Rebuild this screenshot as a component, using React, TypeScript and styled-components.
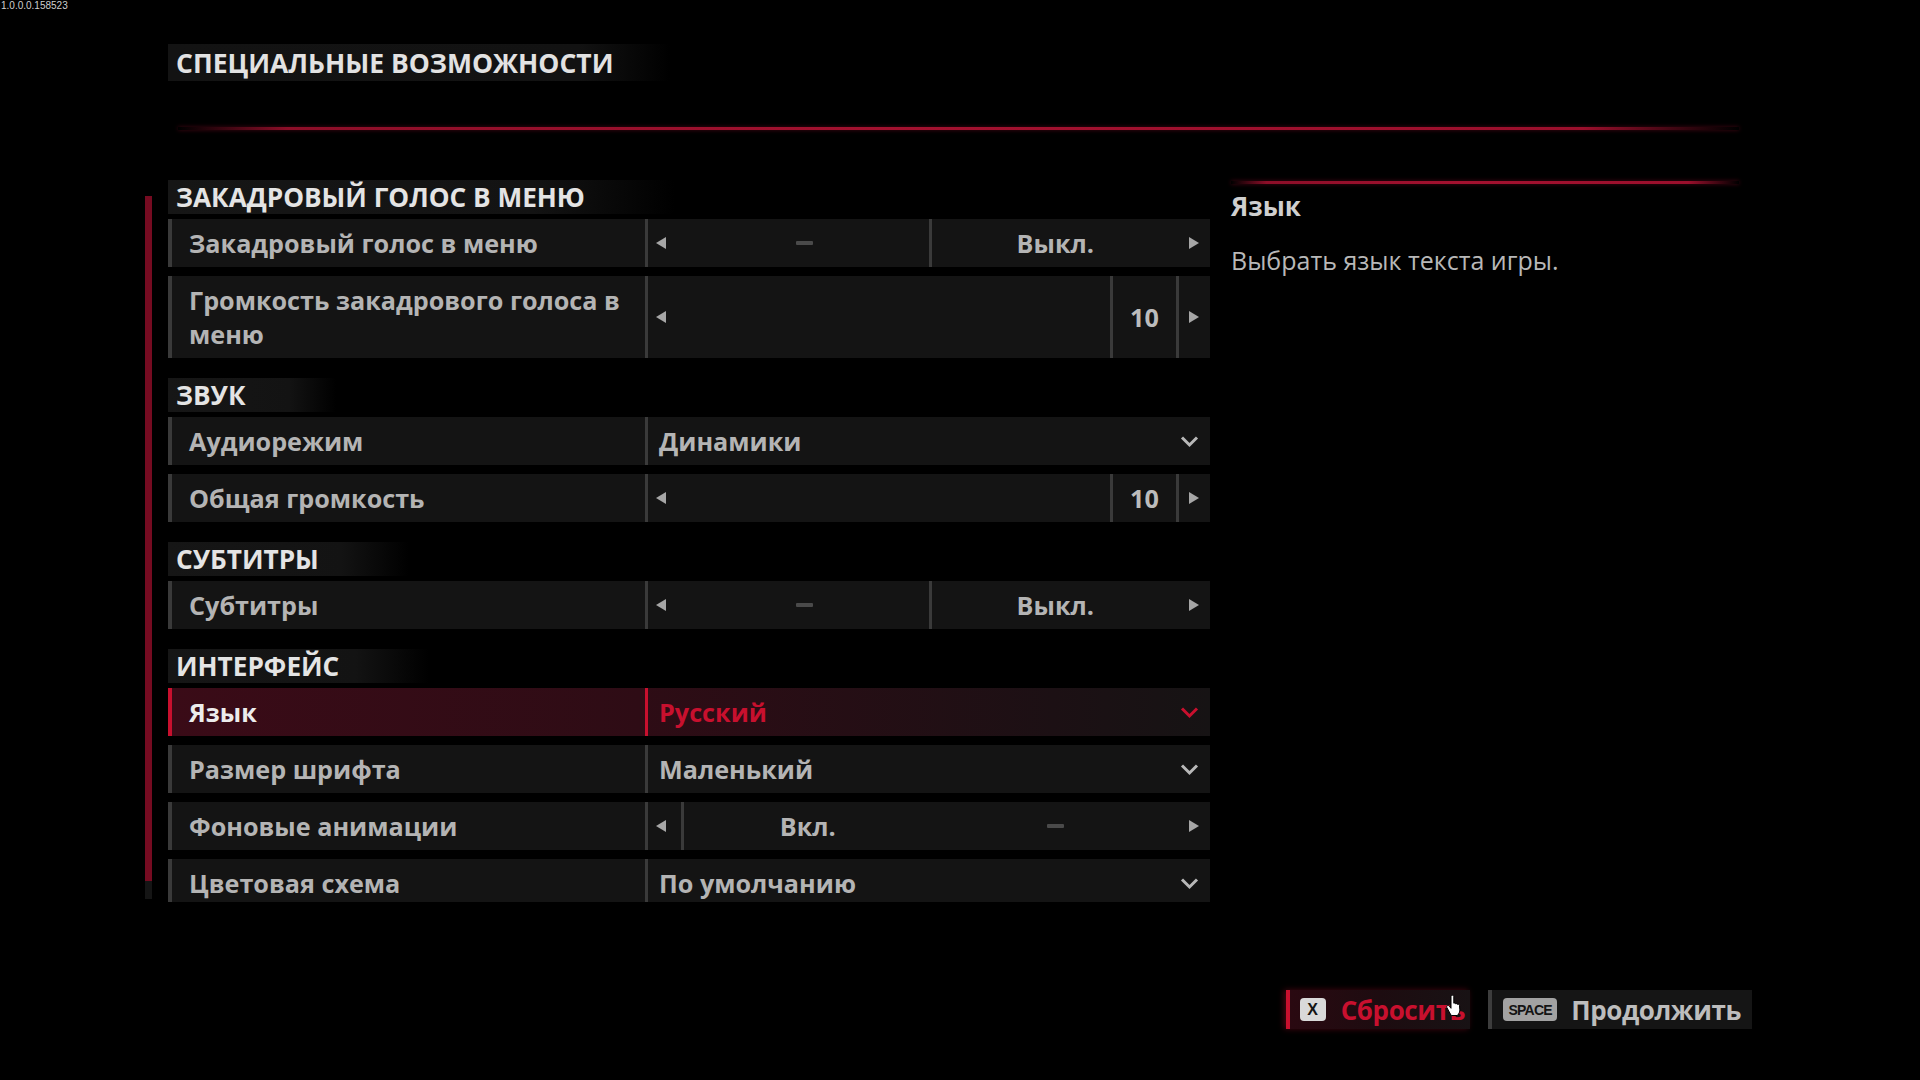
import React from "react";
import styled, { createGlobalStyle, css } from "styled-components";

const GlobalStyle = createGlobalStyle`
  html, body {
    margin: 0;
    padding: 0;
    background: #000;
  }
  * { box-sizing: border-box; }
`;

const FONT = `"Open Sans", "Noto Sans", sans-serif`;
const RED = "#c8102e";
const TEXT = "#b4b4b4";
const EDGE = "#3a3a3a";

const Page = styled.div`
  position: relative;
  width: 1920px;
  height: 1080px;
  overflow: hidden;
  background: #000;
  font-family: ${FONT};
  display: flex;
  flex-direction: column;
`;

const BuildStamp = styled.div`
  position: absolute;
  top: 0;
  left: 1px;
  font-family: "Liberation Sans", Arial, sans-serif;
  font-size: 10px;
  line-height: 11px;
  color: #cfcfcf;
`;

const Header = styled.header`
  padding: 44px 0 0 168px;
`;

const TitleBar = styled.div`
  width: 502px;
  height: 37px;
  display: flex;
  align-items: center;
  padding-left: 8px;
  background: linear-gradient(90deg, #131313 0%, #121212 82%, rgba(18, 18, 18, 0) 100%);
`;

const Title = styled.h1`
  margin: 0;
  font-size: 26.5px;
  font-weight: 700;
  color: #e2e2e2;
  white-space: nowrap;
`;

const Rule = styled.div<{ $width: number }>`
  height: 3px;
  width: ${(p) => p.$width}px;
  background: linear-gradient(
    90deg,
    rgba(150, 14, 42, 0) 0%,
    #8c0e28 7%,
    #a3112f 45%,
    #9b0f2c 90%,
    rgba(150, 14, 42, 0) 100%
  );
  box-shadow: 0 0 4px rgba(160, 16, 46, 0.45);
`;

const TopRule = styled(Rule)`
  margin: 46px 0 0 178px;
`;

const Body = styled.main`
  margin-top: 50px;
  padding-left: 145px;
  display: flex;
  height: 722px;
`;

const ScrollTrack = styled.div`
  margin-top: 16px;
  width: 7px;
  height: 703px;
  background: #151515;
`;

const ScrollThumb = styled.div`
  width: 100%;
  background: #760b21;
`;

const List = styled.div`
  margin-left: 16px;
  width: 1042px;
  height: 722px;
  overflow: hidden;
  display: flex;
  flex-direction: column;
  gap: 20px;
`;

const Section = styled.section`
  display: flex;
  flex-direction: column;
  align-items: flex-start;
`;

const SectionTitle = styled.h2`
  margin: 0;
  height: 34px;
  display: inline-flex;
  align-items: center;
  padding: 0 90px 0 8px;
  font-size: 26.2px;
  font-weight: 700;
  color: #e4e4e4;
  white-space: nowrap;
  background: linear-gradient(90deg, #161616 0%, #131313 72%, rgba(19, 19, 19, 0) 100%);
`;

const Rows = styled.div`
  margin-top: 5px;
  width: 100%;
  display: flex;
  flex-direction: column;
  gap: 9px;
`;

const Row = styled.div<{ $active?: boolean }>`
  display: grid;
  grid-template-columns: 473px 1fr;
  min-height: 48px;
  background: #141414;
  border-left: 4px solid ${EDGE};
  ${(p) =>
    p.$active &&
    css`
      border-left-color: ${RED};
      background: linear-gradient(90deg, #3a0b17 0%, #2e0c15 45%, #1c1014 85%, #161314 100%);
    `}
`;

const Label = styled.div<{ $active?: boolean }>`
  display: flex;
  align-items: center;
  padding: 7px 18px 7px 17px;
  font-size: 25.2px;
  line-height: 34px;
  font-weight: 700;
  color: ${(p) => (p.$active ? "#ececec" : TEXT)};
`;

const Value = styled.div<{ $active?: boolean }>`
  display: flex;
  align-items: stretch;
  border-left: 3px solid ${(p) => (p.$active ? RED : EDGE)};
  color: ${(p) => (p.$active ? RED : TEXT)};
  font-size: 25.2px;
  font-weight: 700;
`;

const DropValue = styled.div`
  flex: 1;
  display: flex;
  align-items: center;
  justify-content: space-between;
  padding: 0 11px 0 11px;
`;

const ArrowZone = styled.div<{ $side: "left" | "right" }>`
  width: ${(p) => (p.$side === "left" ? 33 : 31)}px;
  flex: none;
  display: flex;
  align-items: center;
  padding-left: ${(p) => (p.$side === "left" ? 8 : 10)}px;
`;

const Triangle = styled.span<{ $dir: "left" | "right" }>`
  width: 0;
  height: 0;
  border-top: 6px solid transparent;
  border-bottom: 6px solid transparent;
  ${(p) =>
    p.$dir === "left"
      ? css`border-right: 10px solid #a6a6a6;`
      : css`border-left: 10px solid #a6a6a6;`}
`;

const Segment = styled.div`
  flex: 1;
  display: flex;
  align-items: center;
  justify-content: center;
`;

const Divider = styled.span`
  width: 3px;
  flex: none;
  background: ${EDGE};
`;

const Dash = styled.span`
  width: 17px;
  height: 4px;
  border-radius: 1px;
  background: #4a4a4a;
`;

const Track = styled.div`
  flex: 1;
`;

const Amount = styled.div`
  width: 63px;
  flex: none;
  display: flex;
  align-items: center;
  justify-content: center;
  color: #bcbcbc;
`;

const Aside = styled.aside`
  margin-left: 21px;
  width: 508px;
  padding-top: 1px;
`;

const AsideTitle = styled.h3`
  margin: 5px 0 0;
  font-size: 26px;
  line-height: 34px;
  font-weight: 700;
  color: #cfcfcf;
`;

const AsideText = styled.p`
  margin: 20px 0 0;
  font-size: 25px;
  line-height: 34px;
  font-weight: 400;
  color: #b8b8b8;
`;

const Footer = styled.footer`
  margin-top: 88px;
  padding-right: 168px;
  display: flex;
  justify-content: flex-end;
  gap: 18px;
`;

const Button = styled.button<{ $danger?: boolean }>`
  position: relative;
  height: 39px;
  display: flex;
  align-items: center;
  gap: ${(p) => (p.$danger ? 15 : 14)}px;
  padding: 0 ${(p) => (p.$danger ? 5 : 11)}px 0 ${(p) => (p.$danger ? 10 : 11)}px;
  border: none;
  border-left: 4px solid ${(p) => (p.$danger ? RED : "#3d3d3d")};
  background: ${(p) =>
    p.$danger ? "linear-gradient(90deg, #2a0911 0%, #1d0c10 50%, #181214 100%)" : "#151515"};
  color: ${(p) => (p.$danger ? RED : "#bdbdbd")};
  font-family: ${FONT};
  font-size: 26px;
  font-weight: 700;
  letter-spacing: -0.4px;
  cursor: pointer;
  ${(p) => p.$danger && css`box-shadow: -2px 0 6px rgba(200, 16, 46, 0.35);`}
`;

const KeyCap = styled.span<{ $wide?: boolean }>`
  height: 23px;
  min-width: ${(p) => (p.$wide ? 54 : 26)}px;
  padding: 0 2px;
  border-radius: 4px;
  display: inline-flex;
  align-items: center;
  justify-content: center;
  background: ${(p) => (p.$wide ? "#a2a2a2" : "#d9d9d9")};
  color: #141414;
  font-family: "Liberation Sans", Arial, sans-serif;
  font-weight: 700;
  font-size: ${(p) => (p.$wide ? 14 : 16)}px;
  letter-spacing: ${(p) => (p.$wide ? -0.8 : 0)}px;
`;

const Pointer = styled.svg`
  position: absolute;
  right: 8px;
  top: 5px;
`;

type Control =
  | { kind: "toggle"; on: boolean }
  | { kind: "slider"; value: number }
  | { kind: "select"; value: string };

type Setting = { label: string; control: Control; active?: boolean };
type Group = { title: string; items: Setting[] };

const groups: Group[] = [
  {
    title: "ЗАКАДРОВЫЙ ГОЛОС В МЕНЮ",
    items: [
      { label: "Закадровый голос в меню", control: { kind: "toggle", on: false } },
      { label: "Громкость закадрового голоса в меню", control: { kind: "slider", value: 10 } },
    ],
  },
  {
    title: "ЗВУК",
    items: [
      { label: "Аудиорежим", control: { kind: "select", value: "Динамики" } },
      { label: "Общая громкость", control: { kind: "slider", value: 10 } },
    ],
  },
  {
    title: "СУБТИТРЫ",
    items: [{ label: "Субтитры", control: { kind: "toggle", on: false } }],
  },
  {
    title: "ИНТЕРФЕЙС",
    items: [
      { label: "Язык", control: { kind: "select", value: "Русский" }, active: true },
      { label: "Размер шрифта", control: { kind: "select", value: "Маленький" } },
      { label: "Фоновые анимации", control: { kind: "toggle", on: true } },
      { label: "Цветовая схема", control: { kind: "select", value: "По умолчанию" } },
    ],
  },
];

const Chevron = ({ color }: { color: string }) => (
  <svg width="19" height="13" viewBox="0 0 19 13">
    <path d="M2 2.5 L9.5 10 L17 2.5" fill="none" stroke={color} strokeWidth="3" />
  </svg>
);

const ControlView = ({ control, active }: { control: Control; active?: boolean }) => {
  if (control.kind === "select") {
    return (
      <DropValue>
        <span>{control.value}</span>
        <Chevron color={active ? RED : "#b8b8b8"} />
      </DropValue>
    );
  }
  if (control.kind === "slider") {
    return (
      <>
        <ArrowZone $side="left">
          <Triangle $dir="left" />
        </ArrowZone>
        <Track />
        <Divider />
        <Amount>{control.value}</Amount>
        <Divider />
        <ArrowZone $side="right">
          <Triangle $dir="right" />
        </ArrowZone>
      </>
    );
  }
  return (
    <>
      <ArrowZone $side="left">
        <Triangle $dir="left" />
      </ArrowZone>
      {control.on ? (
        <>
          <Divider />
          <Segment>Вкл.</Segment>
          <Segment>
            <Dash />
          </Segment>
        </>
      ) : (
        <>
          <Segment>
            <Dash />
          </Segment>
          <Divider />
          <Segment>Выкл.</Segment>
        </>
      )}
      <ArrowZone $side="right">
        <Triangle $dir="right" />
      </ArrowZone>
    </>
  );
};

export default function App() {
  const scrolled = 0.975;
  return (
    <>
      <GlobalStyle />
      <Page>
        <BuildStamp>1.0.0.0.158523</BuildStamp>
        <Header>
          <TitleBar>
            <Title>СПЕЦИАЛЬНЫЕ ВОЗМОЖНОСТИ</Title>
          </TitleBar>
        </Header>
        <TopRule $width={1561} />
        <Body>
          <ScrollTrack>
            <ScrollThumb style={{ height: `${scrolled * 100}%` }} />
          </ScrollTrack>
          <List>
            {groups.map((g) => (
              <Section key={g.title}>
                <SectionTitle>{g.title}</SectionTitle>
                <Rows>
                  {g.items.map((s) => (
                    <Row key={s.label} $active={s.active}>
                      <Label $active={s.active}>{s.label}</Label>
                      <Value $active={s.active}>
                        <ControlView control={s.control} active={s.active} />
                      </Value>
                    </Row>
                  ))}
                </Rows>
              </Section>
            ))}
          </List>
          <Aside>
            <Rule $width={508} />
            <AsideTitle>Язык</AsideTitle>
            <AsideText>Выбрать язык текста игры.</AsideText>
          </Aside>
        </Body>
        <Footer>
          <Button $danger>
            <KeyCap>X</KeyCap>
            <span>Сбросить</span>
            <Pointer width="16" height="21" viewBox="0 0 16 21">
              <path
                d="M5 1.6C5 .8 5.6.2 6.4.2s1.4.6 1.4 1.4V8.2c.8-.4 1.7 0 1.9.7.7-.5 1.7-.2 2 .6.8-.4 1.7.1 1.8 1l.3 4.3c.1 1.6-.4 3.1-1.4 4.3l-.9 1.4H5.3l-1.5-2.5L.8 12.4c-.4-.8 0-1.6.8-1.8.6-.2 1.3 0 1.7.6L5 13.3V1.6z"
                fill="#ffffff"
                stroke="#000000"
                strokeWidth="1"
              />
            </Pointer>
          </Button>
          <Button>
            <KeyCap $wide>SPACE</KeyCap>
            <span>Продолжить</span>
          </Button>
        </Footer>
      </Page>
    </>
  );
}
